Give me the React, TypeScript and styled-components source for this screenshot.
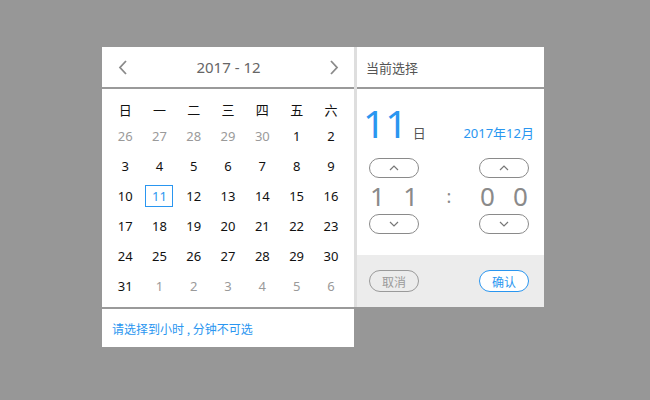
import React from "react";
import styled, { createGlobalStyle } from "styled-components";

const Global = createGlobalStyle`
  html, body { margin: 0; padding: 0; background: #979797; }
  body { font-family: "Noto Sans", "Noto Sans CJK SC", sans-serif; }
  * { box-sizing: border-box; }
`;

const Stage = styled.div`
  padding: 47px 0 0 102px;
  display: flex;
  align-items: flex-start;
`;

const LeftPanel = styled.div`
  width: 252px;
  background: #fff;
  display: flex;
  flex-direction: column;
`;

const Header = styled.div`
  height: 42px;
  border-bottom: 2px solid #9a9a9a;
  display: flex;
  align-items: center;
  justify-content: space-between;
  padding: 0 14px 0 15px;
  color: #666;
  font-size: 15px;
`;

const Arrow = styled.button`
  border: none;
  background: none;
  padding: 0;
  width: 12px;
  height: 16px;
  display: flex;
  align-items: center;
  justify-content: center;
  cursor: pointer;
`;

const Grid = styled.div`
  display: grid;
  grid-template-columns: repeat(7, 34.3px);
  grid-auto-rows: 30px;
  grid-template-rows: 24px;
  padding: 8px 6px 6px 6px;
  border-bottom: 2px solid #9a9a9a;
`;

const WeekDay = styled.div`
  display: flex;
  align-items: center;
  justify-content: center;
  font-size: 13px;
  color: #111;
  font-family: "Noto Sans CJK SC", sans-serif;
`;

const Day = styled.div<{ $muted?: boolean; $active?: boolean }>`
  display: flex;
  align-items: center;
  justify-content: center;
  font-size: 13px;
  color: ${(p) => (p.$muted ? "#9a9a9a" : p.$active ? "#2a96f0" : "#111")};
  span {
    width: 28px;
    height: 22px;
    display: flex;
    align-items: center;
    justify-content: center;
    border: 1px solid ${(p) => (p.$active ? "#2a96f0" : "transparent")};
  }
`;

const Tip = styled.div`
  height: 38px;
  display: flex;
  align-items: center;
  padding-left: 10px;
  font-size: 12px;
  color: #2a96f0;
  font-family: "Noto Sans CJK SC", sans-serif;
`;

const RightPanel = styled.div`
  width: 190px;
  border-left: 3px solid #dedede;
  background: #fff;
  display: flex;
  flex-direction: column;
`;

const RightHeader = styled.div`
  height: 42px;
  border-bottom: 2px solid #9a9a9a;
  display: flex;
  align-items: center;
  padding-left: 9px;
  font-size: 13px;
  color: #555;
  font-family: "Noto Sans CJK SC", sans-serif;
`;

const RightBody = styled.div`
  height: 166px;
  display: flex;
  flex-direction: column;
  padding: 0 15px 0 7px;
`;

const DateLine = styled.div`
  display: flex;
  align-items: baseline;
  height: 66px;
  padding-top: 2px;
`;

const BigDay = styled.span`
  font-size: 39px;
  color: #2a96f0;
  line-height: 64px;
  margin-left: -1px;
`;

const DayUnit = styled.span`
  font-size: 13px;
  color: #555;
  margin-left: 5px;
  font-family: "Noto Sans CJK SC", sans-serif;
`;

const YearMonth = styled.span`
  margin-left: auto;
  margin-right: -5px;
  font-size: 13px;
  color: #2a96f0;
  font-family: "Noto Sans", "Noto Sans CJK SC", sans-serif;
`;

const TimeRow = styled.div`
  display: flex;
  align-items: center;
  justify-content: space-between;
  padding-left: 5px;
  margin-top: 3px;
`;

const TimeCol = styled.div`
  display: flex;
  flex-direction: column;
  align-items: center;
  width: 50px;
`;

const Stepper = styled.button`
  width: 50px;
  height: 20px;
  border: 1px solid #8a8a8a;
  border-radius: 10px;
  background: #fff;
  display: flex;
  align-items: center;
  justify-content: center;
  padding: 0;
  cursor: pointer;
`;

const Digits = styled.div`
  height: 36px;
  display: flex;
  align-items: center;
  justify-content: space-between;
  width: 50px;
  padding: 0 1px;
  font-size: 26px;
  font-weight: 400;
  color: #8a8a8a;
`;

const Colon = styled.div`
  font-size: 18px;
  color: #8a8a8a;
`;

const Footer = styled.div`
  height: 52px;
  background: #ececec;
  display: flex;
  align-items: center;
  justify-content: space-between;
  padding: 0 15px 0 12px;
`;

const ActionButton = styled.button<{ $primary?: boolean }>`
  width: 50px;
  height: 22px;
  border-radius: 11px;
  border: 1px solid ${(p) => (p.$primary ? "#2a96f0" : "#9a9a9a")};
  background: ${(p) => (p.$primary ? "#fff" : "transparent")};
  color: ${(p) => (p.$primary ? "#2a96f0" : "#9a9a9a")};
  font-size: 12px;
  padding: 0;
  font-family: "Noto Sans CJK SC", sans-serif;
  cursor: pointer;
`;

const Chevron = ({ dir }: { dir: "left" | "right" | "up" | "down" }) => {
  if (dir === "left" || dir === "right") {
    const d = dir === "left" ? "M8 1 L2 7.5 L8 14" : "M2 1 L8 7.5 L2 14";
    return (
      <svg width="10" height="15" viewBox="0 0 10 15">
        <path d={d} fill="none" stroke="#8a8a8a" strokeWidth="1.8" />
      </svg>
    );
  }
  const d = dir === "up" ? "M1 5 L5 1 L9 5" : "M1 1 L5 5 L9 1";
  return (
    <svg width="10" height="6" viewBox="0 0 10 6">
      <path d={d} fill="none" stroke="#777" strokeWidth="1.2" />
    </svg>
  );
};

const weekDays = ["日", "一", "二", "三", "四", "五", "六"];
const days: { n: number; muted?: boolean }[] = [
  ...[26, 27, 28, 29, 30].map((n) => ({ n, muted: true })),
  ...Array.from({ length: 31 }, (_, i) => ({ n: i + 1 })),
  ...[1, 2, 3, 4, 5, 6].map((n) => ({ n, muted: true })),
];

export default function App() {
  return (
    <>
      <Global />
      <Stage>
        <LeftPanel>
          <Header>
            <Arrow aria-label="prev"><Chevron dir="left" /></Arrow>
            <span>2017 - 12</span>
            <Arrow aria-label="next"><Chevron dir="right" /></Arrow>
          </Header>
          <Grid>
            {weekDays.map((w) => (
              <WeekDay key={w}>{w}</WeekDay>
            ))}
            {days.map((d, i) => (
              <Day key={i} $muted={d.muted} $active={!d.muted && d.n === 11}>
                <span>{d.n}</span>
              </Day>
            ))}
          </Grid>
          <Tip>请选择到小时 , 分钟不可选</Tip>
        </LeftPanel>
        <RightPanel>
          <RightHeader>当前选择</RightHeader>
          <RightBody>
            <DateLine>
              <BigDay>11</BigDay>
              <DayUnit>日</DayUnit>
              <YearMonth>2017年12月</YearMonth>
            </DateLine>
            <TimeRow>
              <TimeCol>
                <Stepper><Chevron dir="up" /></Stepper>
                <Digits><span>1</span><span>1</span></Digits>
                <Stepper><Chevron dir="down" /></Stepper>
              </TimeCol>
              <Colon>:</Colon>
              <TimeCol>
                <Stepper><Chevron dir="up" /></Stepper>
                <Digits><span>0</span><span>0</span></Digits>
                <Stepper><Chevron dir="down" /></Stepper>
              </TimeCol>
            </TimeRow>
          </RightBody>
          <Footer>
            <ActionButton>取消</ActionButton>
            <ActionButton $primary>确认</ActionButton>
          </Footer>
        </RightPanel>
      </Stage>
    </>
  );
}
